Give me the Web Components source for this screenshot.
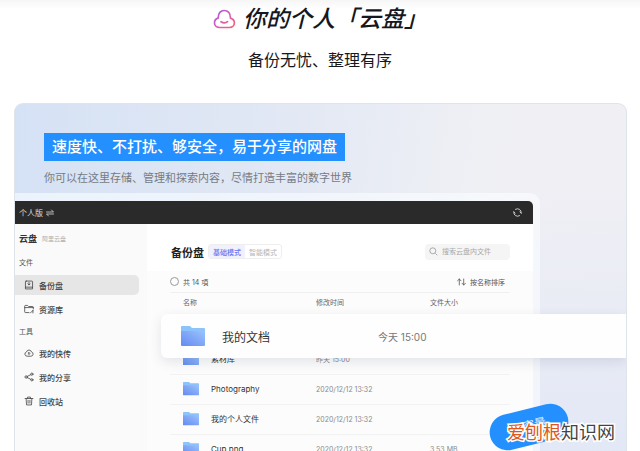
<!DOCTYPE html>
<html lang="zh-CN">
<head>
<meta charset="utf-8">
<title>你的个人「云盘」</title>
<style>
  * { box-sizing: border-box; }
  html, body { margin: 0; height: 100%; }
  body { overflow: hidden; background: #fff; color: #15181d; font-family: "Liberation Sans", "Noto Sans CJK SC", sans-serif; }
</style>
</head>
<body>
<drive-page></drive-page>
<script>
const base = `*{box-sizing:border-box} :host{box-sizing:border-box} h1,h2,h3,p,td,th,button,input{margin:0;padding:0} button,input{font:inherit;color:inherit;border:0;background:none} svg{display:block} a{color:inherit;text-decoration:none}`;
function define(name, markup) {
  customElements.define(name, class extends HTMLElement {
    constructor() {
      super();
      const t = document.createElement('template');
      t.innerHTML = `<style>${base}</style>` + (typeof markup === 'function' ? markup(this) : markup);
      this.attachShadow({ mode: 'open' }).append(t.content.cloneNode(true));
    }
  });
}

const glyphs = {
  disk: '<path d="M3 1.5h8a1 1 0 0 1 1 1v10H2v-10a1 1 0 0 1 1-1zM2 10h10M7 3.5v3M5.5 5.5 7 7l1.5-1.500"/>',
  library: '<path d="M7 12H2a1 1 0 0 1-1-1V3a1 1 0 0 1 1-1h3l1.500 1.500H12a1 1 0 0 1 1 1V7M1 5h12M12.500 9v3.500M9 12.500l3.500-3.500"/>',
  cloud: '<path d="M4 11.500a3 3 0 0 1-.5-5.900 3.600 3.600 0 0 1 7 0 3 3 0 0 1-.5 5.900zM7 9.500v-3M5.700 7.600 7 6.300l1.300 1.300"/>',
  share: '<circle cx="3" cy="7" r="1.700"/><circle cx="11" cy="3" r="1.600"/><circle cx="11" cy="11" r="1.600"/><path d="m4.500 6.200 5-2.500M4.500 7.800l5 2.500"/>',
  trash: '<path d="M1.500 3.500h11M5 3.300V1.500h4v1.800M3 3.500l.5 9h7l.5-9M5.700 6v4M8.300 6v4"/>'
};

define('cloud-logo', `<style>:host{display:block;width:23px}</style>
<svg viewBox="0 0 23 20" fill="none"><defs><linearGradient id="g" x1="0" y1="0" x2="1" y2="1"><stop stop-color="#a35bea"/><stop offset=".55" stop-color="#dc5fb5"/><stop offset="1" stop-color="#f7636b"/></linearGradient></defs>
<path d="M6.500 18.500C3.500 18.500 1.500 16.400 1.500 13.800c0-2.300 1.500-4 3.600-4.700C5.300 4.500 7.700 1.500 11.300 1.500s6 3 6.200 7.600c2.200.7 3.900 2.400 3.900 4.700 0 2.600-2.100 4.700-4.900 4.700z" stroke="url(#g)" stroke-width="1.700"/>
<path d="M8 12.700c2 1.400 4.800 1.400 6.600 0" stroke="#e0609f" stroke-width="1.700" stroke-linecap="round"/></svg>`);

define('page-heading', `<style>
:host{display:flex;flex:none;flex-direction:column;align-items:center;padding-top:2px;height:103px;background:linear-gradient(#f6f6f6,#fff 9px)}
h1{display:flex;align-items:center;gap:7px;font-size:23px;line-height:34px;font-weight:500;font-style:italic}
p{font-size:16px;line-height:24px;margin-top:13px}
</style><h1><cloud-logo></cloud-logo><slot name="title"></slot></h1><p><slot></slot></p>`);

define('folder-icon', `<style>:host{display:block;width:16px}</style>
<svg viewBox="0 0 24 20"><defs><linearGradient id="f" x1="0" y1="1" x2="1" y2="0"><stop stop-color="#638af1"/><stop offset="1" stop-color="#9bc2fb"/></linearGradient></defs>
<path d="M0 1Q0 0 1 0h8l2 2h12q1 0 1 1v8H0z" fill="#8bc3fa"/><path d="M0 5h24v14q0 1-1 1H1q-1 0-1-1z" fill="url(#f)"/></svg>`);

define('nav-item', el => `<style>
:host{display:block}
a{display:flex;align-items:center;gap:5px;height:20px;padding-left:9px;font-size:8px;font-weight:500;color:#444;border-radius:0 5px 5px 0}
:host([active]) a{background:#e6e6e6}
svg{width:10px;height:10px;fill:none;stroke:#444;stroke-width:1.100;stroke-linecap:round;stroke-linejoin:round}
</style><a href="#"><svg viewBox="0 0 14 14">${glyphs[el.getAttribute('icon')]}</svg><slot></slot></a>`);

define('drive-sidebar', `<style>
:host{display:block;width:132px;background:#fafafa;padding:7px 8px 0 0;color:#333}
header{display:flex;align-items:center;gap:5px;height:14px;padding-left:4px;font-size:9px;font-weight:700}
small{font-size:6px;font-weight:400;color:#aaa}
h3{font-size:7px;line-height:10px;font-weight:400;color:#555;padding-left:4px;margin:8px 0 6px}
h3.files{margin:13px 0 7px}
nav{display:grid;gap:4px}
</style>
<header>云盘<small>阿里云盘</small></header>
<h3 class="files">文件</h3>
<nav><nav-item icon="disk" active>备份盘</nav-item><nav-item icon="library">资源库</nav-item></nav>
<h3>工具</h3>
<nav><nav-item icon="cloud">我的快传</nav-item><nav-item icon="share">我的分享</nav-item><nav-item icon="trash">回收站</nav-item></nav>`);

define('file-table', `<style>
:host{display:block}
table{width:100%;table-layout:fixed;border-collapse:collapse;font-size:7px;color:#8a8a8a;text-align:left}
th{height:51px;padding-top:5px;vertical-align:top;font-weight:400;line-height:10px;color:#666}
th:first-child,td:first-child{padding-left:13px;width:146px}
th:nth-child(2){width:114px}
td{height:30px;border-bottom:1px solid #f2f2f2}
.name{display:flex;align-items:center;gap:12px;font-size:8px;color:#333}
</style>
<table><thead><tr><th>名称</th><th>修改时间</th><th>文件大小</th></tr></thead><tbody>
<tr><td><span class="name"><folder-icon></folder-icon>素材库</span></td><td>昨天 15:00</td><td></td></tr>
<tr><td><span class="name"><folder-icon></folder-icon>Photography</span></td><td>2020/12/12 13:32</td><td></td></tr>
<tr><td><span class="name"><folder-icon></folder-icon>我的个人文件</span></td><td>2020/12/12 13:32</td><td></td></tr>
<tr><td><span class="name"><folder-icon></folder-icon>Cup.png</span></td><td>2020/12/12 13:32</td><td>3.53 MB</td></tr>
</tbody></table>`);

define('drive-window', `<style>
:host{display:block;padding:8px 7px 0 0;background:rgba(250,253,255,.6);border-radius:0 10px 0 0;font-family:Inter,"Noto Sans CJK SC",sans-serif}
.bar{display:flex;justify-content:space-between;align-items:center;height:23px;padding:0 11px 0 4px;background:#2a2a2a;color:#ddd;font-size:8px;border-radius:0 5px 0 0}
.bar button{display:flex;align-items:center;gap:3px}
.bar svg,.tools svg{fill:none;stroke:currentColor;stroke-linecap:round;stroke-linejoin:round}
.body{display:flex}
main{flex:1;min-width:0;background:#fcfcfc}
.top{display:flex;align-items:center;height:47px;padding:8px 23px 0 24px;background:#fff}
h2{font-size:11px;font-weight:700;color:#222;margin-right:4px}
.tabs{display:flex;height:15px;border:1px solid #eee;border-radius:3px;font-size:7px;color:#b5b5b5}
.tabs button{padding:0 4px}
.tabs button.on{background:#f0f1fd;color:#6876f0;font-weight:500}
.search{display:flex;align-items:center;gap:4px;width:85px;height:16px;margin-left:auto;padding-left:4px;background:#f5f5f5;border-radius:4px;color:#aaa;font-size:7px}
.search svg{flex:none;fill:none;stroke:#aaa}
input[type=search]{width:64px;min-width:0;outline:0;appearance:none}
input::placeholder{color:#aaa;opacity:1}
.tools{display:flex;align-items:center;height:22px;margin:0 23px;border-bottom:1px solid #f0f0f0;font-size:7px;color:#555}
.tools input{appearance:none;width:9px;height:9px;border:1px solid #999;border-radius:50%}
.tools label{padding-left:4px}
.sort{display:flex;align-items:center;gap:4px;margin-left:auto;padding-right:5px}
file-table{margin:0 23px}
</style>
<div class="bar"><button>个人版<svg width="8" height="8" viewBox="0 0 8 8"><path d="M.5 3h7L5.500 1M7.500 5h-7l2 2" stroke-width=".8"/></svg></button>
<button aria-label="刷新"><svg width="9" height="9" viewBox="0 0 9 9"><path d="M2.500 1.300A3.800 3.800 0 0 1 8.200 5M7 3.800l1.200 1.400M6.500 7.700A3.800 3.800 0 0 1 .8 4M2 5.200.8 3.800" stroke-width=".9"/></svg></button></div>
<div class="body"><drive-sidebar></drive-sidebar><main>
<div class="top"><h2>备份盘</h2><div class="tabs"><button class="on">基础模式</button><button>智能模式</button></div>
<label class="search"><svg width="9" height="9" viewBox="0 0 9 9"><circle cx="3.800" cy="3.800" r="3"/><path d="m6.300 6.300 2 2"/></svg><input type="search" placeholder="搜索云盘内文件" aria-label="搜索云盘内文件"></label></div>
<div class="tools"><input type="checkbox" id="all"><label for="all">共 14 項</label>
<button class="sort"><svg width="9" height="8" viewBox="0 0 9 8"><path d="M2.300 7V1M.5 2.800 2.300 1l1.700 1.800M6.700 1v6M5 5.200 6.700 7l1.800-1.800" stroke-width=".8"/></svg>按名称排序</button></div>
<file-table></file-table></main></div>`);

define('featured-file', `<style>
:host{display:flex;align-items:center;height:44px;padding-left:20px;background:#fefefe;border-radius:6px 0 0 6px;box-shadow:0 4px 12px rgba(60,70,100,.13);font-family:Inter,"Noto Sans CJK SC",sans-serif;font-size:12px;color:#333}
folder-icon{width:24px;margin-right:17px}
.name{width:156px}
time{font-size:10px;color:#777}
</style><folder-icon></folder-icon><span class="name"><slot></slot></span><time><slot name="time"></slot></time>`);

define('promo-card', `<style>
:host{display:flex;flex-direction:column;position:relative;flex:1;min-height:0;overflow:hidden;margin:0 13px 0 14px;border:1px solid #dde4ea;border-bottom:0;border-radius:9px 9px 0 0;background:linear-gradient(to bottom,rgba(222,229,247,0) 25%,rgba(222,229,247,.7) 100%),linear-gradient(97deg,#d5e2f5,#e2e8f4 42%,#eff0f4 72%,#efeff4)}
.intro{flex:none;padding:29px 30px 0 29px;height:89px}
h2{width:fit-content;background:#2490ff;color:#fff;font-size:15px;line-height:28px;font-weight:500;padding:0 8px}
p{font-size:11px;line-height:16px;color:#757b84;margin-top:9px;white-space:nowrap}
drive-window{flex:1;margin-right:86px}
featured-file{position:absolute;left:146px;right:0;top:210px}
.pill{position:absolute;right:57px;top:305px;width:80px;height:36px;padding-bottom:6px;border-radius:18px;background:#2490ff;color:#d8ecff;font-size:12px;transform:rotate(-14deg)}
</style>
<div class="intro"><h2><slot name="title"></slot></h2><p><slot></slot></p></div>
<drive-window></drive-window>
<featured-file>我的文档<span slot="time">今天 15:00</span></featured-file>
<button class="pill">大容量</button>`);

define('site-mark', `<style>
:host{position:absolute;right:25px;bottom:5px;font-size:18px;line-height:26px;color:#444;white-space:nowrap;-webkit-text-stroke:3px #fff;paint-order:stroke fill}
b{font-weight:400;color:#e0571c}
</style><b>爱刨根</b>知识网`);

define('drive-page', `<style>
:host{display:flex;flex-direction:column;position:relative;height:100vh;overflow:hidden}
</style>
<page-heading><span slot="title">你的个人「云盘」</span>备份无忧、整理有序</page-heading>
<promo-card><span slot="title">速度快、不打扰、够安全，易于分享的网盘</span>你可以在这里存储、管理和探索内容，尽情打造丰富的数字世界</promo-card>
<site-mark></site-mark>`);
</script>
</body>
</html>
